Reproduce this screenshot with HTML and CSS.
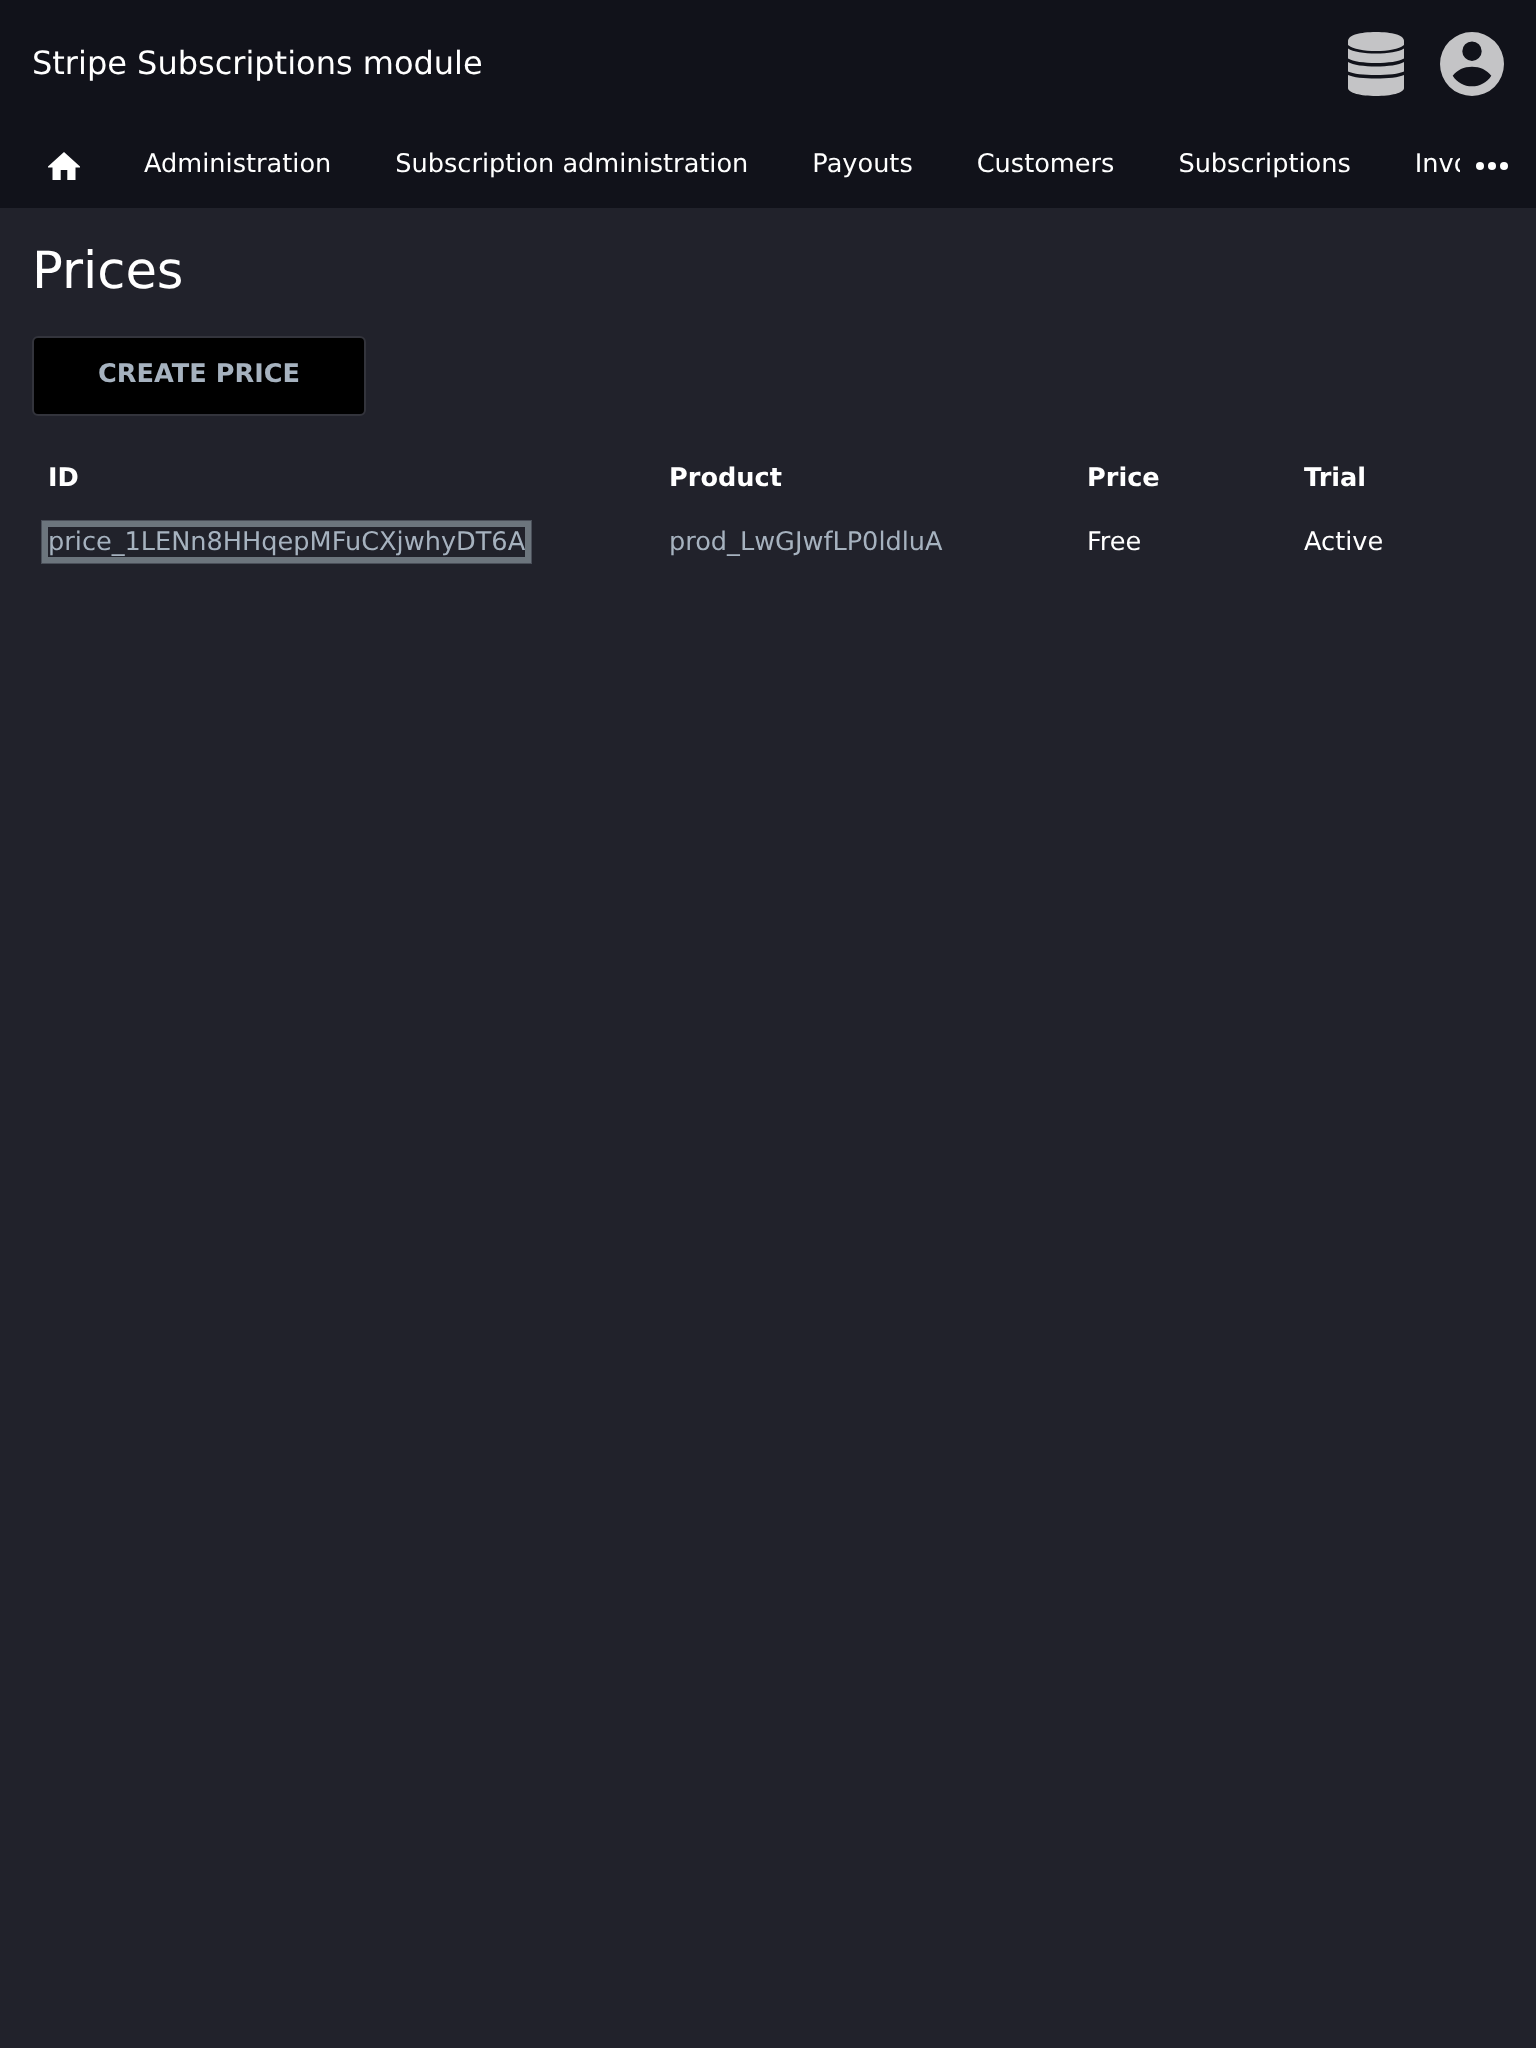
FILE: index.html
```html
<!DOCTYPE html>
<html lang="en">
<head>
<meta charset="utf-8">
<title>Prices</title>
<link rel="stylesheet" href="styles.css">
</head>
<body>
<header class="header">
  <div class="topbar">
    <span class="brand">Stripe Subscriptions module</span>
    <div class="top-icons">
      <svg class="icon-db" viewBox="0 0 56 64" aria-hidden="true"><path d="M0 9C0 3 12 0 28 0s28 3 28 9v4c-5 4-16 6-28 6S5 17 0 13Z"/><path d="M0 16.500c5 3.500 16 5 28 5s23-1.500 28-5v10c-5 3-16 4.500-28 4.500S5 29.500 0 26.500Z"/><path d="M0 30c5 3 16 4.500 28 4.500S51 33 56 30v9.500c-5 2.500-16 3.500-28 3.500S5 42 0 39.500Z"/><path d="M0 43c5 2.500 16 3.500 28 3.500S51 45.500 56 43v13c0 5-13 8-28 8S0 61 0 56Z"/></svg>
      <svg class="icon-user" viewBox="0 0 64 64" aria-hidden="true"><path fill-rule="evenodd" d="M32 0a32 32 0 1 0 0 64 32 32 0 0 0 0-64Zm0 9.500a9.700 9.700 0 1 1 0 19.400 9.700 9.700 0 0 1 0-19.400ZM12.700 43.700C17 38 24 34.700 32 34.700s15 3.300 19.300 9C47 50.500 40 54.300 32 54.300s-15-3.800-19.300-10.600Z"/></svg>
    </div>
  </div>
  <nav class="nav">
    <div class="nav-items">
      <a class="nav-home"><svg class="icon-home" viewBox="0 0 32 28" aria-hidden="true"><path d="M16 0 32 14.500v1h-4.500V28h-8.200V18h-6.600v10H4.500V15.500H0v-1Z"/></svg></a>
      <a class="nav-item">Administration</a>
      <a class="nav-item">Subscription administration</a>
      <a class="nav-item">Payouts</a>
      <a class="nav-item">Customers</a>
      <a class="nav-item">Subscriptions</a>
      <a class="nav-item">Invoices</a>
    </div>
    <div class="nav-more"><i class="dot"></i><i class="dot"></i><i class="dot"></i></div>
  </nav>
</header>
<main class="main">
  <h1 class="title">Prices</h1>
  <button class="btn">CREATE PRICE</button>
  <table class="table">
    <thead>
      <tr><th class="col-id">ID</th><th class="col-product">Product</th><th class="col-price">Price</th><th>Trial</th></tr>
    </thead>
    <tbody>
      <tr>
        <td><a class="link focus">price_1LENn8HHqepMFuCXjwhyDT6A</a></td>
        <td><a class="link">prod_LwGJwfLP0ldluA</a></td>
        <td>Free</td>
        <td>Active</td>
      </tr>
    </tbody>
  </table>
</main>
</body>
</html>
```
FILE: styles.css
```css
* { box-sizing: border-box; }
html, body { margin: 0; }
body {
  min-height: 2048px;
  background: #21222b;
  color: #fff;
  font-family: "DejaVu Sans", sans-serif;
  font-size: 25.6px;
  text-rendering: geometricPrecision;
}
.header { background: #11121a; height: 208px; }
.topbar {
  display: flex;
  justify-content: space-between;
  align-items: center;
  height: 128px;
  padding: 32px;
}
.brand { font-size: 32px; line-height: 60px; position: relative; top: -1px; will-change: opacity; }
.top-icons { display: flex; align-items: center; gap: 36px; }
.icon-db { width: 56px; height: 64px; fill: #c4c4c6; display: block; }
.icon-user { width: 64px; height: 64px; fill: #c4c4c6; display: block; }
.nav { position: relative; height: 80px; padding-left: 16px; padding-right: 76px; }
.nav-items { display: flex; align-items: center; height: 71px; overflow: hidden; white-space: nowrap; will-change: opacity; }
.nav-home { flex: none; width: 128px; padding-left: 32px; padding-top: 5px; display: block; }
.icon-home { width: 32px; height: 28px; fill: #fff; display: block; }
.nav-item { flex: none; margin-right: 64px; color: #fff; }
.nav-more { position: absolute; right: 28px; top: 34px; display: flex; gap: 4px; }
.dot { width: 8px; height: 8px; border-radius: 50%; background: #fff; display: block; }
.main { padding: 32px; will-change: opacity; }
.title { margin: 0 0 34px; font-size: 51.2px; font-weight: 400; line-height: 62px; }
.btn {
  display: block;
  width: 334px;
  height: 80px;
  padding: 0 0 5px;
  background: #000;
  border: 2px solid #33343c;
  border-radius: 6px;
  color: #a6b2bf;
  font: 700 25.6px "DejaVu Sans", sans-serif;
  text-rendering: geometricPrecision;
}
.table { border-collapse: collapse; margin-top: 30px; table-layout: fixed; width: 1472px; }
.table th, .table td { padding: 8px 16px; text-align: left; line-height: 48px; font-size: 25.6px; }
.table th { font-weight: 700; }
.col-id { width: 621px; }
.col-product { width: 418px; }
.col-price { width: 217px; }
.link { color: #a6b2bf; }
.focus { outline: 6px solid #6c757d; box-shadow: 0 0 0 7px #4a4f59; }
```
